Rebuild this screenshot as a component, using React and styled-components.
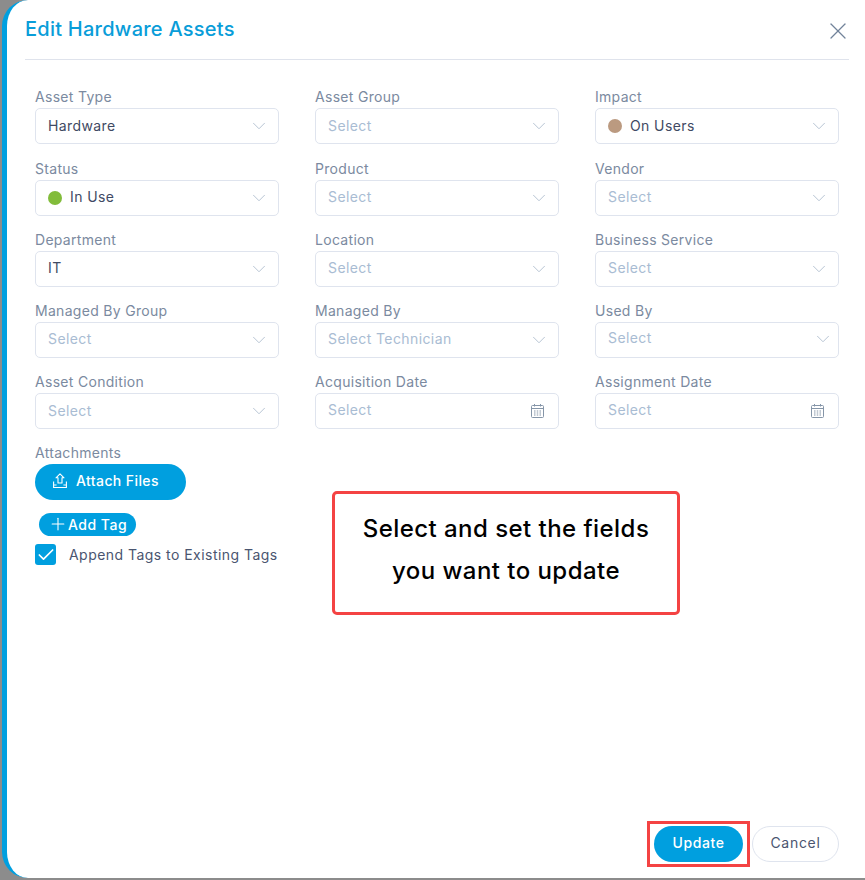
import styled, { createGlobalStyle } from 'styled-components'
import { ChevronDown, X, Plus, Check } from 'lucide-react'

const fields = [
  { label: 'Asset Type', value: 'Hardware' },
  { label: 'Asset Group' },
  { label: 'Impact', value: 'On Users', dot: '#bb9a80' },
  { label: 'Status', value: 'In Use', dot: '#82bc3a' },
  { label: 'Product' },
  { label: 'Vendor' },
  { label: 'Department', value: 'IT' },
  { label: 'Location' },
  { label: 'Business Service' },
  { label: 'Managed By Group' },
  { label: 'Managed By', placeholder: 'Select Technician' },
  { label: 'Used By', raised: true },
  { label: 'Asset Condition' },
  { label: 'Acquisition Date', date: true },
  { label: 'Assignment Date', date: true },
]

function CalendarIcon() {
  return (
    <CalendarWrap>
      <svg width="13" height="14" viewBox="0 0 13 14" fill="none" stroke="#8595a8" strokeWidth="1">
        <rect x="0.5" y="1.500" width="12" height="12" rx="1" />
        <path d="M0.500 4.500h12M3.500 0v2.500M9.500 0v2.500" />
        <path d="M3 7h1.500M5.750 7h1.500M8.500 7h1.500M3 9h1.500M5.750 9h1.500M8.500 9h1.500M3 11h1.500M5.750 11h1.500M8.500 11h1.500" strokeWidth="1.2" />
      </svg>
    </CalendarWrap>
  )
}

function UploadIcon() {
  return (
    <svg width="14" height="15" viewBox="0 0 14 15" fill="none" stroke="#fff" strokeWidth="1.1">
      <path d="M7 0.800L3 4.800h2v5.200h4V4.800h2z" strokeLinejoin="round" />
      <path d="M0.600 8.500v6h12.800v-6M0.600 12h3M10.400 12h3" />
    </svg>
  )
}

function Field({ label, value, placeholder = 'Select', dot, date, raised }) {
  return (
    <FieldWrap>
      <FieldLabel>{label}</FieldLabel>
      <SelectBox>
        {dot && <Dot $color={dot} />}
        <SelectText $empty={!value} $raised={raised || date}>{value || placeholder}</SelectText>
        {date ? (
          <CalendarIcon />
        ) : (
          <Chevron $shift={raised}>
            <ChevronDown size={22} strokeWidth={0.9} />
          </Chevron>
        )}
      </SelectBox>
    </FieldWrap>
  )
}

export default function App() {
  return (
    <>
      <GlobalStyle />
      <Backdrop>
        <Drawer>
          <Header>
            <Title>Edit Hardware Assets</Title>
            <CloseButton>
              <X size={28} strokeWidth={1.1} />
            </CloseButton>
          </Header>

          <FormBody>
            <FieldGrid>
              {fields.map((f) => (
                <Field key={f.label} {...f} />
              ))}
            </FieldGrid>

            <FieldLabel>Attachments</FieldLabel>
            <AttachButton>
              <UploadIcon />
              Attach Files
            </AttachButton>
            <AddTag>
              <Plus size={20} strokeWidth={1.3} />
              Add Tag
            </AddTag>
            <CheckRow>
              <CheckBox>
                <Check size={20} strokeWidth={2} color="#fff" />
              </CheckBox>
              <CheckLabel>Append Tags to Existing Tags</CheckLabel>
            </CheckRow>
          </FormBody>

          <Footer>
            <Highlight>
              <PrimaryButton>Update</PrimaryButton>
            </Highlight>
            <CancelButton>Cancel</CancelButton>
          </Footer>

          <Callout>
            Select and set the fields
            <br />
            you want to update
          </Callout>
        </Drawer>
      </Backdrop>
    </>
  )
}

const GlobalStyle = createGlobalStyle`
  html, body {
    margin: 0;
    padding: 0;
    background: #8c8c8c;
    font-family: Inter, "Open Sans", "Liberation Sans", sans-serif;
  }
  * {
    box-sizing: border-box;
  }
`

const Backdrop = styled.div`
  width: 865px;
  height: 880px;
  padding: 0 0 2px 2px;
  overflow: hidden;
`

const Drawer = styled.div`
  position: relative;
  height: 100%;
  display: flex;
  flex-direction: column;
  background: #fff;
  border-left: 5px solid #009fdf;
  border-radius: 26px 0 0 26px;
  padding: 0 16px 0 18px;
`

const Header = styled.div`
  height: 60px;
  flex-shrink: 0;
  display: flex;
  align-items: center;
  justify-content: space-between;
  border-bottom: 1px solid #dfe3ec;
`

const Title = styled.h1`
  margin: -1px 0 0;
  font-size: 20px;
  font-weight: 500;
  letter-spacing: 0.25px;
  color: #099dd9;
`

const CloseButton = styled.div`
  display: flex;
  margin: 2px -3px 0 0;
  color: #71839a;
`

const FormBody = styled.div`
  flex: 1;
  padding: 26.4px 10px 0;
  display: flex;
  flex-direction: column;
  align-items: flex-start;
`

const FieldGrid = styled.div`
  display: grid;
  grid-template-columns: repeat(3, 244px);
  column-gap: 36px;
  row-gap: 13.2px;
  margin-bottom: 13px;
`

const FieldWrap = styled.div`
  display: flex;
  flex-direction: column;
`

const FieldLabel = styled.label`
  font-size: 14px;
  line-height: 22px;
  letter-spacing: 0.3px;
  color: #7b8aa0;
`

const SelectBox = styled.div`
  height: 36px;
  display: flex;
  align-items: center;
  padding: 0 8px 0 12px;
  border: 1px solid #dfe4ee;
  border-radius: 5px;
  background: #fff;
`

const Dot = styled.span`
  width: 14px;
  height: 14px;
  margin-right: 8px;
  border-radius: 50%;
  background: ${(p) => p.$color};
`

const SelectText = styled.span`
  flex: 1;
  font-size: 14px;
  letter-spacing: 0.4px;
  margin-top: ${(p) => (p.$raised ? '-4px' : '-2px')};
  color: ${(p) => (p.$empty ? '#a9bcd3' : '#3f4a63')};
`

const Chevron = styled.span`
  display: flex;
  color: #a9b8cb;
  transform: ${(p) => (p.$shift ? 'translate(4px, -1px)' : 'none')};
`

const CalendarWrap = styled.span`
  display: flex;
  margin-right: 6px;
`

const AttachButton = styled.button`
  width: 151px;
  height: 36px;
  display: flex;
  align-items: center;
  gap: 9px;
  padding: 0 0 3px 18px;
  border: 0;
  border-radius: 18px;
  background: #009fdf;
  color: #fff;
  font: 500 14px Inter, "Open Sans", sans-serif;
  letter-spacing: 0.4px;
`

const AddTag = styled.button`
  width: 97px;
  height: 23px;
  margin: 13px 0 0 4px;
  display: flex;
  align-items: center;
  padding: 0 0 1px 9px;
  border: 0;
  border-radius: 12px;
  background: #009fdf;
  color: #fff;
  font: 500 14px Inter, "Open Sans", sans-serif;
  letter-spacing: 0.5px;
`

const CheckRow = styled.div`
  display: flex;
  align-items: center;
  gap: 13px;
  margin-top: 8px;
`

const CheckBox = styled.span`
  width: 21px;
  height: 21px;
  display: flex;
  align-items: center;
  justify-content: center;
  border-radius: 3px;
  background: #009fdf;
`

const CheckLabel = styled.span`
  font-size: 14px;
  letter-spacing: 0.46px;
  color: #4a5570;
`

const Footer = styled.div`
  flex-shrink: 0;
  display: flex;
  justify-content: flex-end;
  align-items: center;
  gap: 2px;
  padding: 0 10px 11px 0;
`

const Highlight = styled.div`
  padding: 2px 4px 2px 4px;
  border: 3px solid #f44343;
`

const PrimaryButton = styled.button`
  display: block;
  width: 89px;
  height: 36px;
  padding: 0 0 3px;
  border: 0;
  border-radius: 18px;
  background: #009fdf;
  color: #fff;
  font: 500 14px Inter, "Open Sans", sans-serif;
  letter-spacing: 0.6px;
`

const CancelButton = styled.button`
  width: 87px;
  height: 36px;
  padding: 0 0 3px;
  border: 1px solid #dfe4ee;
  border-radius: 18px;
  background: #fff;
  color: #4a5570;
  font: 400 14px Inter, "Open Sans", sans-serif;
  letter-spacing: 0.7px;
`

const Callout = styled.div`
  position: absolute;
  left: 325px;
  top: 491px;
  width: 348px;
  height: 124px;
  display: flex;
  align-items: center;
  justify-content: center;
  padding-bottom: 6px;
  text-align: center;
  background: #fff;
  border: 3px solid #f44343;
  border-radius: 5px;
  color: #000;
  font-size: 24px;
  font-weight: 500;
  letter-spacing: 0.45px;
  line-height: 42px;
`
